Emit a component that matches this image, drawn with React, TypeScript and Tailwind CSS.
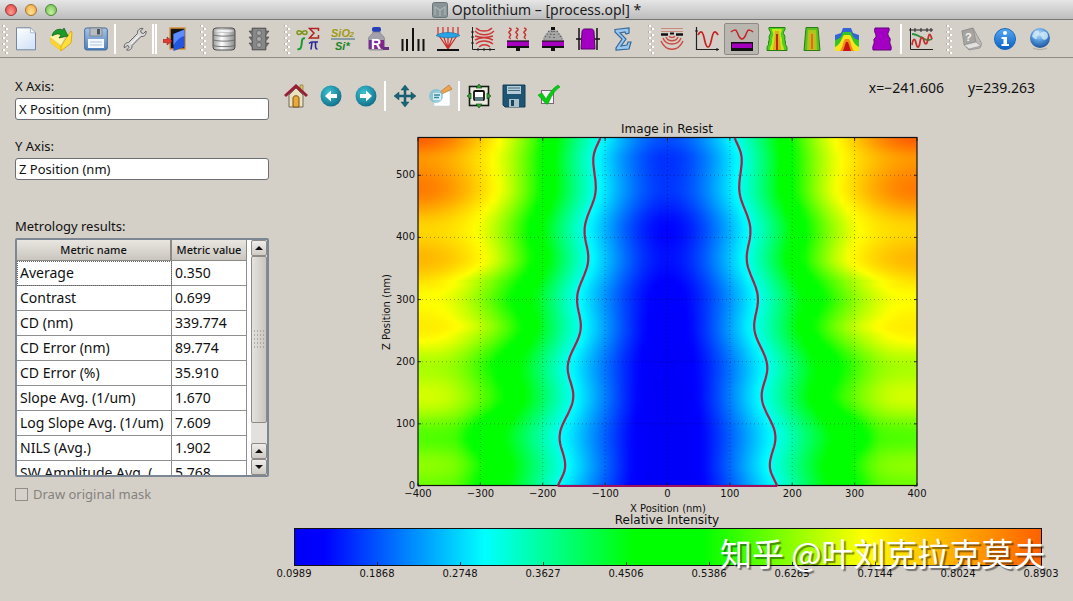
import { type ReactNode } from 'react';

/* ---------- Icons of the main toolbar ---------- */

function Icon({ children }: { children: ReactNode }) {
  return (
    <svg viewBox="0 0 24 24" className="size-6 shrink-0" aria-hidden="true">
      {children}
    </svg>
  );
}

const NewIcon = () => (
  <Icon>
    <defs>
      <linearGradient id="paper" x1="0" y1="0" x2="0.6" y2="1">
        <stop offset="0" stopColor="#fff" />
        <stop offset="1" stopColor="#d5e4f8" />
      </linearGradient>
    </defs>
    <path d="M2.500 .8h14l5 5v17h-19z" fill="url(#paper)" stroke="#7387a3" />
    <path d="M16.500 .8v5h5z" fill="#fff" stroke="#9aa9be" strokeWidth=".8" />
  </Icon>
);

const OpenIcon = () => (
  <Icon>
    <path d="M1 10 12 20 22 4l1 2-1 10-10 8L2 16z" fill="#e0a800" />
    <path d="m1 10 11 9v5L2 16z" fill="#fbd42c" />
    <path d="M12 19 22 4l1 2-1 10-10 8z" fill="#ffdf3a" stroke="#c99400" strokeWidth=".6" />
    <path d="m1 10 5-5 10 5-4 8z" fill="#fff6a8" />
    <path d="M3 9c1-6 7-8 11-6l1-2 4 8-9 2 2-3c-3-2-5-1-9 1z" fill="#1c9a2a" stroke="#0c5c16" strokeWidth=".7" />
  </Icon>
);

const SaveIcon = () => (
  <Icon>
    <defs>
      <linearGradient id="disk" x1="0" y1="0" x2="0" y2="1">
        <stop offset="0" stopColor="#a9c5e6" />
        <stop offset="1" stopColor="#4f80bb" />
      </linearGradient>
    </defs>
    <rect x=".7" y="1" width="22.6" height="22" rx="2" fill="url(#disk)" stroke="#416a9e" />
    <path d="M6 1h12v8H6z" fill="#b9bdc2" stroke="#6e7780" strokeWidth=".7" />
    <path d="M13 2h3v5.500h-3z" fill="#4b5560" />
    <rect x="4" y="12" width="16" height="9" fill="#f6fafe" />
    <path d="M6 15h12M6 18h12" stroke="#a8c4e4" />
  </Icon>
);

const WrenchIcon = () => (
  <Icon>
    <path
      d="M1.500 21c-1-3 1-5.500 4-5.500l9-9C14 3 17 .8 20 1.500L17.500 4l1 2 2 .5L23 4c.6 3.500-1.500 6-5 5.500l-9 9c.3 3.500-2.500 5.500-5.500 4.500L6 20.500l-.5-1.500-1.500-.5z"
      fill="#d9d9d9"
      stroke="#555"
      strokeWidth=".9"
    />
    <path d="m8 17 8-8.500" stroke="#fff" />
  </Icon>
);

const ExitIcon = () => (
  <Icon>
    <path d="M7 1h15v21H7z" fill="#151515" stroke="#d3933f" strokeWidth="1.500" />
    <path d="M10.500 7 21.500 2.500V20l-11 4z" fill="#2455e0" />
    <path d="M10.500 7 21.500 2.500V9c-5 1-8 5-11 9z" fill="#5c8cff" />
    <path d="M0 12.500h4V10l5 4-5 4v-2.500H0z" fill="#e33b32" stroke="#9e1b16" strokeWidth=".6" />
  </Icon>
);

const DatabaseIcon = () => (
  <Icon>
    <defs>
      <linearGradient id="drum" x1="0" x2="1">
        <stop offset="0" stopColor="#999" />
        <stop offset=".4" stopColor="#fff" />
        <stop offset="1" stopColor="#888" />
      </linearGradient>
    </defs>
    <rect x="1" y="1" width="22" height="22" rx="3" fill="url(#drum)" stroke="#505050" />
    <path d="M2 4c4-2 16-2 20 0-4 2-16 2-20 0z" fill="#f3f3f3" stroke="#aaa" strokeWidth=".6" />
    <path d="M1.500 8c4 1.500 17 1.500 21 0M1.500 13c4 1.500 17 1.500 21 0M1.500 18.500c4 1.500 17 1.500 21 0" fill="none" stroke="#666" strokeWidth=".9" />
  </Icon>
);

const ChipIcon = () => (
  <Icon>
    <path
      d="M2 4h3V1h14v3h3l-3 4v2h3l-3 4v2h3l-3 4v3H5v-3l-3-4h3v-2l-3-4h3V8z"
      fill="#6c6c6c"
      stroke="#484848"
      strokeWidth=".6"
    />
    <rect x="6" y="2" width="12" height="20" fill="#878787" />
    <circle cx="12" cy="6" r="2.500" fill="#aaa" stroke="#555" strokeWidth=".6" />
    <circle cx="12" cy="12" r="2.500" fill="#aaa" stroke="#555" strokeWidth=".6" />
    <circle cx="12" cy="18" r="2.500" fill="#aaa" stroke="#555" strokeWidth=".6" />
  </Icon>
);

const MathIcon = () => (
  <Icon>
    <path
      d="M6 5.500C4.500 3 1 3 1 5.500s3.500 2.500 5 0 5-2.500 5 0-3.500 2.500-5 0z"
      fill="none"
      stroke="#7d9418"
      strokeWidth="1.500"
    />
    <path d="M22.500 4V1.500h-9L18 6l-4.500 5h9V8" fill="none" stroke="#b02222" strokeWidth="1.500" />
    <path d="M9 11.500c-3-1-3 2-3.300 5S5 23 1.500 22" fill="none" stroke="#199a35" strokeWidth="2" />
    <path d="M13 16.500c1-1 1.500-1.500 3-1.500h6M16 15.500 15 22.500M19.500 15.500c0 3-.5 7 2 6.500" fill="none" stroke="#28289a" strokeWidth="1.600" />
  </Icon>
);

const MaterialIcon = () => (
  <Icon>
    <g fontFamily="'Liberation Sans', sans-serif" fontWeight="bold" fontStyle="italic">
      <text x="0" y="9.500" fontSize="11" fill="#a29a16">SiO</text>
      <text x="18.500" y="10" fontSize="8" fill="#a29a16">2</text>
      <text x="4" y="22.500" fontSize="11" fill="#1c861c">Si*</text>
    </g>
    <path d="M0 12h24" stroke="#557a88" strokeWidth="1.200" />
  </Icon>
);

const ResistIcon = () => (
  <Icon>
    <rect x="6" y="0" width="9" height="5" rx="2" fill="#2540b8" />
    <path d="M7 5h7c0 3 4.500 3 4.500 7v9c0 1.500-1 2-2 2H4.500c-1 0-2-.5-2-2v-9C2.500 8 7 8 7 5z" fill="#a4a0ac" stroke="#807c88" strokeWidth=".7" />
    <path d="M3 13h15v9H3z" fill="#7d2790" />
    <path d="M17 20h6v3h-6z" fill="#6a2c7c" />
    <text x="5" y="22" fontSize="14" fontWeight="bold" fill="#fff" fontFamily="'Liberation Sans', sans-serif">R</text>
  </Icon>
);

const MaskIcon = () => (
  <Icon>
    <path d="M1.500 12v12M6 12v12M12 1v23M17.500 12v12M22.500 12v12" stroke="#111" strokeWidth="2" />
  </Icon>
);

const LensIcon = () => (
  <Icon>
    <path d="M2 0v7l10 15L22 7V0M7 0v8l5 14 5-14V0M12 0v22" fill="none" stroke="#cf2b2b" strokeWidth="1.200" />
    <path d="M0 8.500c5-4 19-4 24 0-5 3-19 3-24 0z" fill="#28a4e6" stroke="#146a9c" strokeWidth=".6" />
    <path d="M1 23h22" stroke="#111" strokeWidth="2" />
  </Icon>
);

const ImagingIcon = () => (
  <Icon>
    <path d="M1.500 0v22.500H24M0 5h3M0 10h3M0 16h3M7 24v-3M13 24v-3M19 24v-3" fill="none" stroke="#222" />
    <path
      d="M5 1c4 4 12 4 16 0M4 4c5 5 14 5 19 0M4 9c6 2 12 2 18 0M4 13c6-3 12-3 18 0M5 17c4-4 12-4 17 0M8 20c3-3 8-3 11 0"
      fill="none"
      stroke="#cf3636"
      strokeWidth="1.400"
    />
  </Icon>
);

const WaferIcon = ({ children }: { children: ReactNode }) => (
  <Icon>
    {children}
    <path d="M1 14h22v5H1z" fill="#a400bd" />
    <path d="M1 19h22v2H14v3h-4v-3H1z" fill="#111" />
    <path d="M1 14h22" stroke="#111" strokeWidth="1.200" />
  </Icon>
);

const BakeIcon = () => (
  <WaferIcon>
    <path
      d="M3 1c4 1 1 3 0 4s3 2 1 4 1 2 0 3M10 1c4 1 1 3 0 4s3 2 1 4 1 2 0 3M18 1c4 1 1 3 0 4s3 2 1 4 1 2 0 3"
      fill="none"
      stroke="#c83232"
      strokeWidth="1.500"
    />
  </WaferIcon>
);

const DevelopIcon = () => (
  <WaferIcon>
    <path d="M10 0h4v3h-4z" fill="#111" />
    <path d="M9 3h6l6 6 1 4H2l1-4z" fill="#a6a6a6" />
    <path d="M8 4 3 12M11 4 8 12M13 4v8M16 4l5 8" stroke="#555" strokeWidth="1.500" strokeDasharray="1 2" />
  </WaferIcon>
);

const ProfileIcon = () => (
  <Icon>
    <path d="M9 2h6c2 0 3 1 3 3l1 17H5L6 5c0-2 1-3 3-3z" fill="#a400c4" stroke="#5a006c" />
    <path d="M3 1v22M21 1v22M0 12h5M24 12h-5" stroke="#111" strokeWidth="1.500" />
  </Icon>
);

const SigmaIcon = () => (
  <Icon>
    <path
      d="M4 2.500 18 1v5l-3 1-1-2-5 .8 6 6.200-5 7 6-1 1-3h3l-2 7L5 23v-2l6-9-7-7z"
      fill="#9cc8ec"
      stroke="#32699f"
      strokeWidth="1.200"
    />
  </Icon>
);

const AerialIcon = () => (
  <Icon>
    <path d="M1 1.500h22M1 4.500h22" stroke="#cc8a7e" strokeWidth="1.200" />
    <path d="M1 7.500h7M16 7.500h7" stroke="#111" strokeWidth="2.500" />
    <path d="M10 6.500h4" stroke="#111" strokeWidth="2" />
    <path
      d="M9 9c1 2 5 2 6 0M6 10c2 5 10 5 12 0M3 11c3 8 15 8 18 0M1 14c5 11 17 11 22 0"
      fill="none"
      stroke="#cb4b42"
      strokeWidth="1.500"
    />
  </Icon>
);

const CurveIcon = () => (
  <Icon>
    <path d="M1.500 0v22.500H24M0 4h3M22 21v3" fill="none" stroke="#222" strokeWidth="1.200" />
    <path d="M3 8c2-4 4-4 5-1 2 5 2 13 5 13s3-8 5-13c1-3 3-3 5 1" fill="none" stroke="#c42424" strokeWidth="1.700" />
  </Icon>
);

const ImageResistIcon = () => (
  <Icon>
    <path d="M1 5c2-2 5-3 6 0 2 4 2 7 5 7s3-3 5-7c1-3 4-2 6 0" fill="none" stroke="#c42424" strokeWidth="1.500" />
    <path d="M1 15h22v9H1z" fill="#111" />
    <path d="M2 16.500h20V21H2z" fill="#a400bd" />
  </Icon>
);

const PebIcon = () => (
  <Icon>
    <path d="M4 .5h16c1 3-3 4-1 7s0 4 1 6 0 4 1 5 1 2 1 5H2c0-3 0-4 1-5s0-3 1-5-1-3 1-6-2-4-1-7z" fill="#4fd01d" stroke="#257d12" />
    <path d="M7 2h10c0 3-2 4-1 7s1 3 1 6 2 4 2 8H5c0-4 2-5 2-8s0-3 1-6-1-4-1-7z" fill="#c3ea1d" />
    <path d="M10 4h4l1 10 1 9H8l1-9z" fill="#e3a81c" />
    <path d="M11 7h2v16h-2z" fill="#b82b16" />
  </Icon>
);

const RateIcon = () => (
  <Icon>
    <path d="M6 .5h12l2 23H4z" fill="#5cc022" stroke="#2c7d18" />
    <path d="M8 3h8l1 20H7z" fill="#a8c81c" />
    <path d="M9.500 6h5v17h-5z" fill="#d9b024" />
    <path d="M11 7h2v15h-2z" fill="#cf761d" />
  </Icon>
);

const DevTimeIcon = () => (
  <Icon>
    <path d="M0 24V8l6-2 2-5h8l2 5 6 2v16z" fill="#3465d5" />
    <path d="M0 24V13c5-1 7-4 8-8h8c1 4 3 7 8 8v11z" fill="#36c522" />
    <path d="M0 24v-4c6-3 6-8 9-12h6c3 4 3 9 9 12v4z" fill="#f5e51c" />
    <path d="M5 24c3-4 3-9 5-12h4c2 3 2 8 5 12z" fill="#f58a1c" />
    <path d="M8 24l3-9h2l3 9z" fill="#c41616" />
  </Icon>
);

const ResistProfileIcon = () => (
  <Icon>
    <path d="M5 1h14c1 4-2 4-1 7s3 3 2 6 2 4 1 9H3c-1-5 2-6 1-9s3-3 2-6-2-3-1-7z" fill="#a400c4" stroke="#64007a" />
  </Icon>
);

const StandingIcon = () => (
  <Icon>
    <path d="M1.500 1v21.500H24M0 3h24M6 1v4M12 1v4M18 1v4M22 1v4" fill="none" stroke="#222" />
    <path d="M3 7c8 0 13 9 20 5" fill="none" stroke="#2a9440" strokeWidth="1.800" />
    <path d="M3 18c1-7 3-7 4-2s3 6 4-1 3-5 4-1 3 4 4-2 2-6 4 0" fill="none" stroke="#c23030" strokeWidth="1.800" />
  </Icon>
);

const HelpIcon = () => (
  <Icon>
    <path d="m4 4 11-3 9 16-2 4-11 2-3-3z" fill="#b9b8b5" stroke="#8c8b88" strokeWidth=".7" />
    <path d="m4 4 11-3 3 14-12 3z" fill="#a5a4a1" stroke="#858482" strokeWidth=".6" />
    <path d="m6 18 12-3 5 4-12 3z" fill="#e2e1de" stroke="#888" strokeWidth=".6" />
    <text x="7" y="14" fontSize="11" fontWeight="bold" fill="#f4f4f2" fontFamily="'Liberation Sans', sans-serif">?</text>
  </Icon>
);

const InfoIcon = () => (
  <Icon>
    <defs>
      <linearGradient id="info" x1="0" y1="0" x2="0" y2="1">
        <stop offset="0" stopColor="#58a9f2" />
        <stop offset="1" stopColor="#0b5fc4" />
      </linearGradient>
    </defs>
    <circle cx="12" cy="12" r="10.500" fill="url(#info)" stroke="#1b66b8" />
    <circle cx="12" cy="6" r="2" fill="#fff" />
    <path d="M8.500 10H14v7h2v2H8.500v-2h2v-5h-2z" fill="#fff" />
  </Icon>
);

const GlobeIcon = () => (
  <Icon>
    <defs>
      <radialGradient id="globe" cx=".45" cy=".3" r=".75">
        <stop offset="0" stopColor="#c5e4fb" />
        <stop offset=".5" stopColor="#4f94d8" />
        <stop offset="1" stopColor="#174a92" />
      </radialGradient>
    </defs>
    <circle cx="12" cy="11" r="10" fill="url(#globe)" />
    <path d="M6 5c3-3 6-1 5 2s-3 2-2 4-4 1-5-2zM13 6c3-3 7-1 7 3s-5 5-6 2-3-3-1-5z" fill="#d4ecfa" opacity=".8" />
    <path d="M5 21c4 2 10 2 14 0" stroke="#8c8c88" opacity=".6" fill="none" />
  </Icon>
);

/* ---------- Icons of the plot toolbar ---------- */

const HomeIcon = () => (
  <Icon>
    <path d="M5 11v12h14V11l-7-7z" fill="#e8e2c0" stroke="#70685c" />
    <path d="M16 1h3v7h-3z" fill="#d8c36a" stroke="#806c30" strokeWidth=".6" />
    <path d="m1 12 11-10 11 10" fill="none" stroke="#981e36" strokeWidth="3" />
    <path d="M9 23v-9c0-3 6-3 6 0v9z" fill="#eba836" stroke="#7c5218" />
  </Icon>
);

const CircleArrow = ({ forward = false }: { forward?: boolean }) => (
  <Icon>
    <defs>
      <radialGradient id="teal" cx=".4" cy=".35" r=".7">
        <stop offset="0" stopColor="#3cc4d4" />
        <stop offset="1" stopColor="#116c86" />
      </radialGradient>
    </defs>
    <circle cx="12" cy="12" r="10.500" fill="url(#teal)" />
    <path
      d={forward ? 'M18 12l-6-5.500V10H6v4h6v3.500z' : 'M6 12l6-5.500V10h6v4h-6v3.500z'}
      fill="#fff"
    />
  </Icon>
);

const MoveIcon = () => (
  <Icon>
    <path
      d="m12 1 4 5h-3v5h5V8l5 4-5 4v-3h-5v5h3l-4 5-4-5h3v-5H6v3l-5-4 5-4v3h5V6H8z"
      fill="#176478"
      stroke="#10505f"
      strokeWidth=".5"
    />
  </Icon>
);

const ZoomRectIcon = () => (
  <Icon>
    <path d="M6 7h16v15H6z" fill="#fff" stroke="#bcd3dc" strokeWidth=".6" />
    <path d="m12 8 9-7 3 4-10 5z" fill="#eda44d" stroke="#a56b28" strokeWidth=".6" />
    <circle cx="8" cy="12" r="7" fill="#75bed2" opacity=".75" />
    <path d="M5 9h8v7H5z" fill="#d8eef4" />
    <path d="M6 11h6M6 13.500h5" stroke="#348a9c" strokeWidth="1.400" />
  </Icon>
);

const SubplotIcon = () => (
  <Icon>
    <rect x="2.500" y="2.500" width="19" height="19" fill="#eceade" stroke="#101c14" strokeWidth="1.600" />
    <rect x="7" y="7" width="10" height="9" rx="1" fill="#fff" stroke="#111" strokeWidth="1.800" />
    <path d="M8 13h8v4H8z" fill="#5a7a80" />
    <path d="m12 0 3 4H9zM12 24l3-4H9zM0 12l4-3v6zM24 12l-4-3v6z" fill="#39a335" stroke="#165218" strokeWidth=".7" />
  </Icon>
);

const FloppyIcon = () => (
  <Icon>
    <path d="M1 1h22v22H3l-2-2z" fill="#1e5572" stroke="#143e56" />
    <path d="M5 2h14v8H5z" fill="#b5cbd6" />
    <path d="M6 4h12M6 6.500h12" stroke="#476f82" />
    <path d="M7 15h10v8H7z" fill="#a9bfca" />
    <path d="M9 16h3v6H9z" fill="#1e4259" />
  </Icon>
);

const CheckIcon = () => (
  <Icon>
    <rect x="4.500" y="6.500" width="12" height="13" fill="#f5f0f4" stroke="#7e6478" />
    <path d="m1 11 4-2 4 6C12 9 16 4 21 1l2 2c-6 4-9 10-12 17H9z" fill="#08cc12" stroke="#079c10" strokeWidth=".6" />
  </Icon>
);

/* ---------- Toolbar parts ---------- */

type Tool = { label: string; icon: ReactNode; active?: boolean };

function ToolButton({ label, icon, active }: Tool) {
  return (
    <button
      type="button"
      aria-label={label}
      title={label}
      className={
        active
          ? 'flex h-8 w-[35px] items-center justify-center rounded-xs border border-[#8d8a85] bg-[#bab6b0]'
          : 'flex h-8 w-[35px] items-center justify-center'
      }
    >
      {icon}
    </button>
  );
}

function Grip({ first = false }: { first?: boolean }) {
  return (
    <svg
      viewBox="0 0 7 32"
      className={first ? 'ml-px h-8 w-[7px] shrink-0' : 'ml-[7px] h-8 w-[7px] shrink-0'}
      aria-hidden="true"
    >
      {[2, 8, 14, 20, 26].map((y) => (
        <g key={y}>
          <path d={`M2 ${y}h2v2H2zM5 ${y + 3}h2v2H5z`} fill="#fff" />
          <path d={`M1 ${y}h1v2H1zM4 ${y + 3}h1v2H4z`} fill="#b3afa8" />
        </g>
      ))}
    </svg>
  );
}

const Divider = () => <span className="mx-px h-[30px] w-[2px] bg-white" />;

const fileTools: Tool[] = [
  { label: 'New', icon: <NewIcon /> },
  { label: 'Open', icon: <OpenIcon /> },
  { label: 'Save', icon: <SaveIcon /> },
];
const dataTools: Tool[] = [
  { label: 'Databases', icon: <DatabaseIcon /> },
  { label: 'Core settings', icon: <ChipIcon /> },
];
const stageTools: Tool[] = [
  { label: 'Numerics', icon: <MathIcon /> },
  { label: 'Wafer process', icon: <MaterialIcon /> },
  { label: 'Resist', icon: <ResistIcon /> },
  { label: 'Mask', icon: <MaskIcon /> },
  { label: 'Imaging tool', icon: <LensIcon /> },
  { label: 'Exposure and focus', icon: <ImagingIcon /> },
  { label: 'Post exposure bake', icon: <BakeIcon /> },
  { label: 'Development', icon: <DevelopIcon /> },
  { label: 'Metrology', icon: <ProfileIcon /> },
  { label: 'Simulations', icon: <SigmaIcon /> },
];
const resultTools: Tool[] = [
  { label: 'Aerial image', icon: <AerialIcon /> },
  { label: 'Standing waves', icon: <CurveIcon /> },
  { label: 'Image in resist', icon: <ImageResistIcon />, active: true },
  { label: 'Exposed image', icon: <PebIcon /> },
  { label: 'Latent image', icon: <RateIcon /> },
  { label: 'Develop contours', icon: <DevTimeIcon /> },
  { label: 'Resist profile', icon: <ResistProfileIcon /> },
];
const helpTools: Tool[] = [
  { label: 'Help', icon: <HelpIcon /> },
  { label: 'About', icon: <InfoIcon /> },
  { label: 'Website', icon: <GlobeIcon /> },
];

const Tools = ({ items }: { items: Tool[] }) => (
  <>
    {items.map((t) => (
      <ToolButton key={t.label} {...t} />
    ))}
  </>
);

function TitleBar() {
  return (
    <header className="grid h-5 grid-cols-[1fr_auto_1fr] items-center border-b border-[#767676] bg-linear-to-b from-[#e6e6e6] to-[#bdbdbd]">
      <div className="flex gap-2 pl-[5px]">
        <button type="button" aria-label="Close" className="size-3 rounded-full border border-[#9c3a34] bg-radial-[at_50%_75%] from-[#ff9c94] to-[#dd3e38]" />
        <button type="button" aria-label="Minimize" className="size-3 rounded-full border border-[#a87328] bg-radial-[at_50%_75%] from-[#ffe49a] to-[#efa436]" />
        <button type="button" aria-label="Zoom" className="size-3 rounded-full border border-[#4d8838] bg-radial-[at_50%_75%] from-[#c8f2a4] to-[#68b94a]" />
      </div>
      <h1 className="flex h-5 items-center gap-1 text-[14px] leading-[18px] text-[#1c1c1c]">
        <svg viewBox="0 0 16 16" className="size-4" aria-hidden="true">
          <rect x=".5" y=".5" width="15" height="15" rx="2" fill="#889496" stroke="#69777a" />
          <path d="M3 13V5l5 3 5-3v8M8 8v6" fill="none" stroke="#a9b6b8" strokeWidth="1.200" />
        </svg>
        Optolithium – [process.opl] *
      </h1>
    </header>
  );
}

function MainToolbar() {
  return (
    <nav aria-label="Main tools" className="flex h-[38px] items-center border-b border-[#8f8b85]">
      <Grip first />
      <Tools items={fileTools} />
      <Divider />
      <ToolButton label="Options" icon={<WrenchIcon />} />
      <span className="h-[30px] w-[5px] border-x-2 border-white" />
      <ToolButton label="Exit" icon={<ExitIcon />} />
      <Grip />
      <Tools items={dataTools} />
      <Grip />
      <Tools items={stageTools} />
      <Grip />
      <Tools items={resultTools} />
      <Divider />
      <ToolButton label="Resist simulation" icon={<StandingIcon />} />
      <Grip />
      <Tools items={helpTools} />
    </nav>
  );
}

/* ---------- Left panel ---------- */

const metrics: [string, string][] = [
  ['Average', '0.350'],
  ['Contrast', '0.699'],
  ['CD (nm)', '339.774'],
  ['CD Error (nm)', '89.774'],
  ['CD Error (%)', '35.910'],
  ['Slope Avg. (1/um)', '1.670'],
  ['Log Slope Avg. (1/um)', '7.609'],
  ['NILS (Avg.)', '1.902'],
  ['SW Amplitude Avg. (', '5.768'],
];

function AxisField({ id, label, value }: { id: string; label: string; value: string }) {
  return (
    <div className="mb-[14px]">
      <label htmlFor={id} className="block h-6 leading-6">
        {label}
      </label>
      <input
        id={id}
        defaultValue={value}
        className="block h-[22px] w-full rounded-[3px] border border-[#6c7075] bg-white px-[3px] outline-none"
      />
    </div>
  );
}

function ScrollButton({ label, down = false }: { label: string; down?: boolean }) {
  return (
    <button
      type="button"
      aria-label={label}
      className="flex h-4 w-full items-center justify-center rounded-[2px] border border-[#8e8b86] bg-linear-to-b from-[#efede9] to-[#cfcbc4]"
    >
      <svg viewBox="0 0 8 4" className="h-1 w-2" aria-hidden="true">
        <path d={down ? 'M0 0h8L4 4z' : 'M0 4h8L4 0z'} fill="#111" />
      </svg>
    </button>
  );
}

function SidePanel() {
  return (
    <aside className="w-[254px] shrink-0 pt-4 text-[13px]">
      <AxisField id="x-axis" label="X Axis:" value="X Position (nm)" />
      <AxisField id="y-axis" label="Y Axis:" value="Z Position (nm)" />
      <h2 className="mt-[33px] h-[25px] leading-[26px]">Metrology results:</h2>
      <div className="flex h-[239px] overflow-hidden rounded-xs border-2 border-[#7c8793] bg-white">
        <table className="w-[230px] shrink-0 table-fixed border-separate border-spacing-0 self-start text-[14px]">
          <thead>
            <tr className="h-[21px] bg-linear-to-b from-[#e9e6e1] to-[#c8c4bd] text-[11px] leading-5">
              <th className="w-[155px] border-r-2 border-b border-[#8d8983] p-0 font-medium">Metric name</th>
              <th className="border-r border-b border-[#8d8983] p-0 font-medium">Metric value</th>
            </tr>
          </thead>
          <tbody>
            {metrics.map(([name, value], i) => (
              <tr key={name} className="h-[25px] leading-6 whitespace-nowrap">
                <td
                  className={
                    i === 0
                      ? 'border-r border-b border-[#8f8f8f] p-0 pl-[3px] outline-1 -outline-offset-1 outline-dotted outline-[#666]'
                      : 'border-r border-b border-[#8f8f8f] p-0 pl-[3px]'
                  }
                >
                  {name}
                </td>
                <td className="border-r border-b border-[#8f8f8f] p-0 pl-[3px]">{value}</td>
              </tr>
            ))}
          </tbody>
        </table>
        <div className="ml-1 flex flex-1 flex-col bg-[#e3e1de]">
          <ScrollButton label="Scroll up" />
          <div className="flex h-[167px] items-center justify-center rounded-[2px] border border-[#8e8b86] bg-linear-to-r from-[#e6e3de] to-[#c9c5be]">
            <svg viewBox="0 0 12 20" className="h-5 w-3" aria-hidden="true">
              {[0, 4, 8, 12, 16].map((y) => (
                <path key={y} d={`M1 ${y + 1}h1m2 0h1m2 0h1m2 0h1`} stroke="#85817b" />
              ))}
            </svg>
          </div>
          <div className="flex-1" />
          <ScrollButton label="Line up" />
          <ScrollButton label="Line down" down />
        </div>
      </div>
      <label className="mt-[5px] flex h-6 items-center gap-[5px] text-[#85827d]">
        <input
          type="checkbox"
          disabled
          className="size-[13px] appearance-none border border-[#918e89] bg-[#d6d2cb]"
        />
        Draw original mask
      </label>
    </aside>
  );
}

/* ---------- Plot ---------- */

type Rgb = [number, number, number];

const colorStops: [number, Rgb][] = [
  [0, [0, 0, 248]],
  [0.04, [0, 0, 255]],
  [0.255, [0, 255, 255]],
  [0.455, [0, 255, 0]],
  [0.547, [0, 255, 0]],
  [0.762, [255, 255, 0]],
  [1, [255, 96, 0]],
];

function colorAt(t: number): string {
  const v = Math.min(1, Math.max(0, t));
  let i = 0;
  while (i < colorStops.length - 2 && v > colorStops[i + 1][0]) i++;
  const [a, ca] = colorStops[i];
  const [b, cb] = colorStops[i + 1];
  const f = (v - a) / (b - a);
  return `rgb(${ca.map((c, k) => Math.round(c + (cb[k] - c) * f)).join(',')})`;
}

/* One row per depth: z, centre level, then |x| of the cyan, green start,
   green end and yellow levels, and the level at the edge of the field. */
const field: number[][] = [
  [0, -0.004, 168, 256, 304, 520, 0.64],
  [33, -0.006, 160, 251, 294, 480, 0.665],
  [78, 0, 168, 264, 318, 560, 0.615],
  [145, 0.002, 148, 229, 262, 420, 0.725],
  [190, 0.01, 155, 237, 276, 450, 0.69],
  [257, 0.019, 135, 210, 234, 335, 0.79],
  [300, 0.027, 141, 216, 248, 380, 0.765],
  [367, 0.052, 122, 192, 216, 294, 0.87],
  [410, 0.042, 128, 199, 222, 307, 0.825],
  [480, 0.085, 110, 180, 202, 273, 0.96],
  [525, 0.08, 113, 181, 202, 278, 0.92],
  [560, 0.105, 105, 177, 198, 269, 1],
];

const edge: number[][] = [
  [-12, 178], [33, 164], [78, 173], [145, 151], [190, 160], [257, 139],
  [300, 145], [367, 127], [410, 133], [480, 115], [525, 119], [580, 103],
];

function blend(table: number[][], z: number): number[] {
  let i = 0;
  while (i < table.length - 2 && z > table[i + 1][0]) i++;
  const a = table[i];
  const b = table[i + 1];
  const f = (1 - Math.cos((Math.PI * (z - a[0])) / (b[0] - a[0]))) / 2;
  return a.slice(1).map((v, k) => v + (b[k + 1] - v) * f);
}

/* Monotone cubic through the points of one depth. */
function profile(z: number): (x: number) => number {
  const [centre, cyan, green0, green1, yellow, rim] = blend(field, z);
  /* Where yellow lies near or beyond the rim, the point fades into the rim. */
  const last = Math.min(yellow, 345);
  const level = Math.min(0.762, 0.547 + (rim - 0.547) * 0.88);
  const pts: [number, number][] = [
    [0, centre],
    [cyan, 0.255],
    [green0, 0.455],
    [green1, 0.547],
    [last, level],
    [400, Math.max(rim, level)],
  ];
  const n = pts.length;
  const d = pts.slice(1).map((p, i) => (p[1] - pts[i][1]) / (p[0] - pts[i][0]));
  const m = pts.map((_, i) => {
    if (i === 0 || i === n - 1) return 0;
    return Math.min((d[i - 1] + d[i]) / 2, 3 * Math.min(d[i - 1], d[i]));
  });
  return (x) => {
    let i = 0;
    while (i < n - 2 && x > pts[i + 1][0]) i++;
    const h = pts[i + 1][0] - pts[i][0];
    const s = (x - pts[i][0]) / h;
    return (
      pts[i][1] * (2 * s ** 3 - 3 * s ** 2 + 1) +
      m[i] * h * (s ** 3 - 2 * s ** 2 + s) +
      pts[i + 1][1] * (3 * s ** 2 - 2 * s ** 3) +
      m[i + 1] * h * (s ** 3 - s ** 2)
    );
  };
}

const LEFT = 418;
const TOP = 138;
const WIDTH = 499;
const HEIGHT = 348;
const px = (x: number) => LEFT + ((x + 400) / 800) * WIDTH;
const pz = (z: number) => TOP + HEIGHT - (z / 560) * HEIGHT;

const SAMPLES = 80;
const rows = Array.from({ length: HEIGHT / 2 }, (_, r) => {
  const f = profile(560 - ((r * 2 + 1) / HEIGHT) * 560);
  return Array.from({ length: SAMPLES + 1 }, (_, i) => colorAt(f(Math.abs(-400 + (800 * i) / SAMPLES))));
});

const edgePath = (side: number) =>
  Array.from({ length: 141 }, (_, i) => {
    const z = i * 4;
    return `${i ? 'L' : 'M'}${px(side * blend(edge, z)[0]).toFixed(1)} ${pz(z).toFixed(1)}`;
  }).join('');

const minus = (v: number) => String(v).replace('-', '−');
const xTicks = [-400, -300, -200, -100, 0, 100, 200, 300, 400];
const zTicks = [0, 100, 200, 300, 400, 500];
const barTicks = ['0.0989', '0.1868', '0.2748', '0.3627', '0.4506', '0.5386', '0.6265', '0.7144', '0.8024', '0.8903'];

function Plot() {
  return (
    <svg
      viewBox="278 118 795 483"
      className="block h-auto w-full overflow-visible"
      fontFamily="'DejaVu Sans', sans-serif"
      fontSize="10"
      fill="#111"
      role="img"
      aria-label="Image in Resist"
    >
      <defs>
        {rows.map((row, r) => (
          <linearGradient key={r} id={`row${r}`}>
            {row.map((c, i) => (
              <stop key={i} offset={i / SAMPLES} stopColor={c} />
            ))}
          </linearGradient>
        ))}
        <linearGradient id="bar">
          {colorStops.map(([t]) => (
            <stop key={t} offset={t} stopColor={colorAt(t)} />
          ))}
        </linearGradient>
      </defs>

      <text x="667" y="133" fontSize="12" textAnchor="middle">Image in Resist</text>
      {rows.map((_, r) => (
        <rect key={r} x={LEFT} y={TOP + r * 2} width={WIDTH} height="2" fill={`url(#row${r})`} shapeRendering="crispEdges" />
      ))}
      <g stroke="#000" strokeOpacity=".5" strokeWidth=".7" strokeDasharray="1 3">
        {xTicks.slice(1, -1).map((x) => (
          <path key={x} d={`M${px(x)} ${TOP}v${HEIGHT}`} />
        ))}
        {zTicks.slice(1).map((z) => (
          <path key={z} d={`M${LEFT} ${pz(z)}h${WIDTH}`} />
        ))}
      </g>
      <g stroke="#111" strokeWidth=".8">
        {xTicks.map((x) => (
          <path key={x} d={`M${px(x)} ${TOP}v3M${px(x)} ${TOP + HEIGHT}v-3`} />
        ))}
        {zTicks.map((z) => (
          <path key={z} d={`M${LEFT} ${pz(z)}h3M${LEFT + WIDTH} ${pz(z)}h-3`} />
        ))}
      </g>
      <rect x={LEFT} y={TOP - 0.5} width={WIDTH} height={HEIGHT} fill="none" stroke="#111" strokeWidth="1.200" />
      <g fill="none" stroke="#a8204c" strokeWidth="2.200">
        <path d={edgePath(-1)} />
        <path d={edgePath(1)} />
        <path d={`M${px(-176)} ${pz(0)}H${px(176)}`} stroke="#a01060" strokeWidth="1.800" />
      </g>
      {xTicks.map((x) => (
        <text key={x} x={px(x)} y="497" textAnchor="middle">{minus(x)}</text>
      ))}
      {zTicks.map((z) => (
        <text key={z} x="415" y={pz(z) + 3} textAnchor="end">{z}</text>
      ))}
      <text x="668" y="512" textAnchor="middle">X Position (nm)</text>
      <text transform="translate(390 312) rotate(-90)" textAnchor="middle">Z Position (nm)</text>

      <text x="667" y="524" fontSize="12" textAnchor="middle">Relative Intensity</text>
      <rect x="294.500" y="528.500" width="747" height="37" fill="url(#bar)" stroke="#111" />
      {barTicks.map((label, i) => (
        <g key={label}>
          <path d={`M${294.5 + i * 83} 565v-3`} stroke="#111" strokeWidth=".8" />
          <text x={294 + i * 83} y="577" textAnchor="middle">{label}</text>
        </g>
      ))}
      <text
        x="720"
        y="566"
        fill="#fff"
        fontFamily="'Noto Sans CJK SC', sans-serif"
        fontSize="32"
        className="[text-shadow:2px_2px_1px_rgb(0_0_0/0.45)]"
      >
        知乎 @叶刘克拉克莫夫
      </text>
    </svg>
  );
}

function PlotToolbar() {
  return (
    <div className="flex h-[60px] items-center justify-between pt-4">
      <nav aria-label="Plot tools" className="flex items-center">
        <ToolButton label="Home" icon={<HomeIcon />} />
        <ToolButton label="Back" icon={<CircleArrow />} />
        <ToolButton label="Forward" icon={<CircleArrow forward />} />
        <Divider />
        <ToolButton label="Pan" icon={<MoveIcon />} />
        <ToolButton label="Zoom to rectangle" icon={<ZoomRectIcon />} />
        <Divider />
        <ToolButton label="Configure subplots" icon={<SubplotIcon />} />
        <ToolButton label="Save figure" icon={<FloppyIcon />} />
        <ToolButton label="Apply" icon={<CheckIcon />} />
      </nav>
      <output className="mb-4 flex gap-6 pr-[38px]">
        <span>x=−241.606</span>
        <span>y=239.263</span>
      </output>
    </div>
  );
}

export default function App() {
  return (
    <div className="min-h-screen bg-[#d4d0c8] font-['Noto_Sans','Noto_Sans_CJK_SC',sans-serif] text-[14px] leading-5 text-[#111]">
      <TitleBar />
      <MainToolbar />
      <div className="flex gap-[9px] pl-[15px]">
        <SidePanel />
        <main className="min-w-0 flex-1">
          <PlotToolbar />
          <Plot />
        </main>
      </div>
    </div>
  );
}
